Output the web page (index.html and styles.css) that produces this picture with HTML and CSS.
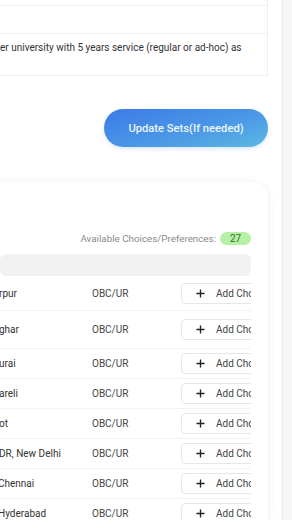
FILE: index.html
```html
<!DOCTYPE html>
<html lang="en">
<head>
<meta charset="utf-8">
<title>Choices</title>
<link rel="stylesheet" href="styles.css">
</head>
<body>
<div class="page">
  <main class="main">
    <section class="info-card">
      <div class="info-row info-row--cut"></div>
      <div class="info-row info-row--empty"></div>
      <div class="info-row info-row--text">er university with 5 years service (regular or ad-hoc) as</div>
    </section>

    <div class="actions">
      <button class="update-btn" type="button">Update Sets(If needed)</button>
    </div>

    <section class="choices-card">
      <div class="avail">
        <span class="avail-label">Available Choices/Preferences:</span>
        <span class="badge">27</span>
      </div>
      <div class="table">
        <div class="thead"></div>
        <div class="rows">
          <div class="row row--a"><span class="c-name">rpur</span><span class="c-cat">OBC/UR</span><span class="c-act"><button class="add-btn" type="button"><svg class="plus" viewBox="0 0 10 10" width="10" height="10"><path d="M5 0.5V9.5M0.5 5H9.5"/></svg><span>Add Choice</span></button></span></div>
          <div class="row row--b"><span class="c-name">ghar</span><span class="c-cat">OBC/UR</span><span class="c-act"><button class="add-btn" type="button"><svg class="plus" viewBox="0 0 10 10" width="10" height="10"><path d="M5 0.5V9.5M0.5 5H9.5"/></svg><span>Add Choice</span></button></span></div>
          <div class="row"><span class="c-name">urai</span><span class="c-cat">OBC/UR</span><span class="c-act"><button class="add-btn" type="button"><svg class="plus" viewBox="0 0 10 10" width="10" height="10"><path d="M5 0.5V9.5M0.5 5H9.5"/></svg><span>Add Choice</span></button></span></div>
          <div class="row"><span class="c-name">areli</span><span class="c-cat">OBC/UR</span><span class="c-act"><button class="add-btn" type="button"><svg class="plus" viewBox="0 0 10 10" width="10" height="10"><path d="M5 0.5V9.5M0.5 5H9.5"/></svg><span>Add Choice</span></button></span></div>
          <div class="row"><span class="c-name">ot</span><span class="c-cat">OBC/UR</span><span class="c-act"><button class="add-btn" type="button"><svg class="plus" viewBox="0 0 10 10" width="10" height="10"><path d="M5 0.5V9.5M0.5 5H9.5"/></svg><span>Add Choice</span></button></span></div>
          <div class="row"><span class="c-name">DR, New Delhi</span><span class="c-cat">OBC/UR</span><span class="c-act"><button class="add-btn" type="button"><svg class="plus" viewBox="0 0 10 10" width="10" height="10"><path d="M5 0.5V9.5M0.5 5H9.5"/></svg><span>Add Choice</span></button></span></div>
          <div class="row"><span class="c-name c-name--cut">Chennai</span><span class="c-cat">OBC/UR</span><span class="c-act"><button class="add-btn" type="button"><svg class="plus" viewBox="0 0 10 10" width="10" height="10"><path d="M5 0.5V9.5M0.5 5H9.5"/></svg><span>Add Choice</span></button></span></div>
          <div class="row"><span class="c-name c-name--cut">Hyderabad</span><span class="c-cat">OBC/UR</span><span class="c-act"><button class="add-btn" type="button"><svg class="plus" viewBox="0 0 10 10" width="10" height="10"><path d="M5 0.5V9.5M0.5 5H9.5"/></svg><span>Add Choice</span></button></span></div>
        </div>
      </div>
    </section>
  </main>
  <aside class="rail"></aside>
</div>
</body>
</html>
```
FILE: styles.css
```css
* { box-sizing: border-box; }

html, body {
  margin: 0;
  padding: 0;
  height: 100%;
}

body {
  font-family: Roboto, "Liberation Sans", Arial, sans-serif;
  background: #f6f6f6;
  color: #333;
  overflow: hidden;
}

.page {
  display: flex;
  width: 292px;
  height: 520px;
  overflow: hidden;
}

.main {
  width: 283px;
  flex: none;
  background: #ffffff;
  border-right: 1px solid #ececec;
  overflow: hidden;
  display: flex;
  flex-direction: column;
}

.rail {
  flex: 1;
  background: #f7f7f7;
}

/* top info card */
.info-card {
  margin-left: -20px;
  margin-right: 14px;
  border-right: 1px solid #efefef;
  border-bottom: 1px solid #efefef;
  display: flex;
  flex-direction: column;
}

.info-row {
  border-bottom: 1px solid #f0f0f0;
}

.info-row:last-child { border-bottom: none; }

.info-row--cut { height: 6px; }
.info-row--empty { height: 28px; }

.info-row--text {
  height: 41px;
  padding: 7px 0 0 20px;
  font-size: 10px;
  line-height: 13px;
  color: #333;
  white-space: nowrap;
}

/* action button */
.actions {
  display: flex;
  justify-content: flex-end;
  padding: 33px 14px 0 0;
}

.update-btn {
  width: 164px;
  height: 38px;
  border: none;
  border-radius: 19px;
  background: linear-gradient(165deg, #3c7be7 0%, #4a97e6 55%, #5cb8e2 100%);
  box-shadow: 0 2px 4px rgba(60, 120, 220, 0.18);
  color: #eef5ff;
  font-family: Roboto, "Liberation Sans", Arial, sans-serif;
  font-size: 11.2px;
  font-weight: 500;
  letter-spacing: 0;
  padding: 0;
}

/* choices card */
.choices-card {
  margin: 35px 14px 0 -20px;
  padding: 49px 17px 0 20px;
  background: #fff;
  border-radius: 16px;
  box-shadow: 0 1px 10px rgba(0, 0, 0, 0.07);
  flex: 1;
}

.avail {
  display: flex;
  justify-content: flex-end;
  align-items: center;
  gap: 4px;
  height: 14px;
}

.avail-label {
  font-size: 9.8px;
  color: #8a8a8a;
}

.badge {
  width: 31px;
  height: 13px;
  border-radius: 7px;
  background: #b6f1a6;
  color: #2f6e2f;
  font-size: 10px;
  line-height: 13px;
  text-align: center;
}

.table {
  margin-top: 9px;
  overflow: hidden;
}

.thead {
  height: 22px;
  background: #f2f2f2;
  border-radius: 6px;
}

.rows {
  box-shadow: 3px 0 3px -1px rgba(0, 0, 0, 0.06);
  overflow: hidden;
  margin-right: 0;
}

.row {
  display: grid;
  grid-template-columns: 92px 89px 100px;
  align-items: center;
  height: 30px;
  border-bottom: 1px solid #f3f3f3;
  font-size: 10px;
  color: #333;
  white-space: nowrap;
}

.row--a { height: 35px; }
.row--b { height: 38px; }

.c-name {
  margin-left: -1px;
}

.c-name--cut { margin-left: -2px; }

.c-cat { color: #444; }

.c-act { display: flex; }

.add-btn {
  display: flex;
  align-items: center;
  gap: 11px;
  height: 21px;
  width: 100px;
  padding: 0 0 0 14px;
  border: 1px solid #e7e7e7;
  border-radius: 4px;
  background: #fff;
  font-family: Roboto, "Liberation Sans", Arial, sans-serif;
  font-size: 10px;
  color: #444;
  white-space: nowrap;
}

.plus {
  width: 9px;
  height: 9px;
  flex: none;
}

.plus path {
  stroke: #222;
  stroke-width: 1.5;
  fill: none;
}
```
